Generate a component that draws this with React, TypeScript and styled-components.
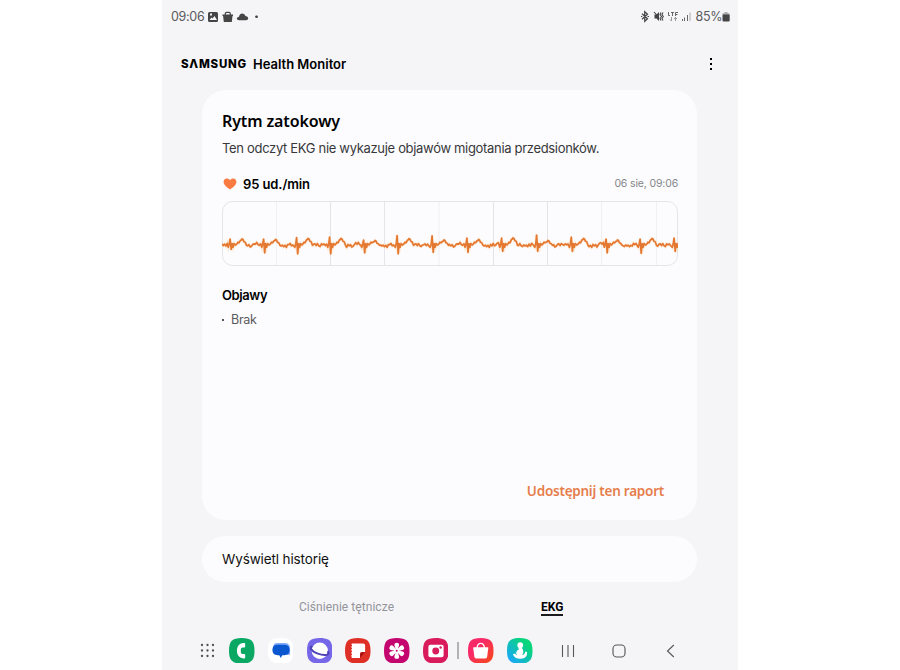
import React from "react";
import styled, { createGlobalStyle } from "styled-components";

const Global = createGlobalStyle`
  * { box-sizing: border-box; }
  body { margin: 0; background: #fff; font-family: Inter, "Liberation Sans", sans-serif; }
`;

const Device = styled.div`
  width: 576px;
  height: 670px;
  margin-left: 162px;
  background: #f5f5f8;
  overflow: hidden;
  display: flex;
  flex-direction: column;
`;

const Label = styled.span<{
  $size: number; $color?: string; $weight?: number; $spacing?: number; $font?: string; $line?: number;
}>`
  display: block;
  white-space: pre;
  font-size: ${(p) => p.$size}px;
  line-height: ${(p) => p.$line ?? 20}px;
  font-weight: ${(p) => p.$weight ?? 400};
  color: ${(p) => p.$color ?? "#000"};
  letter-spacing: ${(p) => p.$spacing ?? 0}px;
  font-family: ${(p) => p.$font ?? "Inter"}, sans-serif;
`;

const StatusBar = styled.div`
  height: 33px;
  padding: 0 8px 0 9px;
  display: flex;
  align-items: center;
  justify-content: space-between;
`;
const StatusGroup = styled.div`
  display: flex;
  align-items: center;
`;
const StatusIcons = styled.svg`
  display: block;
`;

const AppBar = styled.header`
  height: 57px;
  padding: 4px 21px 0 19px;
  display: flex;
  align-items: center;
  justify-content: space-between;
`;
const Brand = styled.div`
  display: flex;
  align-items: center;
  gap: 6px;
  height: 20px;
`;
const MoreButton = styled.button`
  border: 0;
  background: none;
  padding: 0;
  width: 12px;
  height: 20px;
  display: flex;
  flex-direction: column;
  align-items: center;
  justify-content: center;
  gap: 3px;
`;
const MoreDot = styled.i`
  width: 2px;
  height: 2px;
  background: #000;
`;

const Card = styled.section`
  margin: 0 41px 0 40px;
  height: 430px;
  padding: 21px 19px 0 20px;
  border-radius: 24px;
  background: #fcfcfe;
  display: flex;
  flex-direction: column;
`;
const RateRow = styled.div`
  margin-top: 9px;
  height: 20px;
  display: flex;
  align-items: center;
  justify-content: space-between;
`;
const Rate = styled.div`
  display: flex;
  align-items: center;
  gap: 6px;
`;
const Chart = styled.svg`
  display: block;
  margin-top: 7px;
`;
const Symptoms = styled.div`
  margin-top: 18px;
  display: flex;
  flex-direction: column;
  gap: 5px;
`;
const SymptomItem = styled.div`
  display: flex;
  align-items: center;
  gap: 7px;
`;
const Bullet = styled.i`
  width: 2px;
  height: 2px;
  background: #555;
`;
const ShareButton = styled.button`
  border: 0;
  background: none;
  padding: 0;
  margin: auto 14px 19px auto;
`;
const HistoryButton = styled.button`
  margin: 16px 41px 0 40px;
  height: 46px;
  flex: none;
  border: 0;
  border-radius: 23px;
  padding: 0 20px 1px;
  background: #fcfcfe;
  display: flex;
  align-items: center;
`;

const Tabs = styled.nav`
  height: 49px;
  padding-top: 15px;
  display: grid;
  grid-template-columns: 137px 242px auto;
  align-items: start;
`;
const Tab = styled.div<{ $active?: boolean }>`
  width: max-content;
  margin-top: ${(p) => (p.$active ? 3 : 0)}px;
  grid-column: ${(p) => (p.$active ? 3 : 2)};
  border-bottom: 2px solid ${(p) => (p.$active ? "#1c1c20" : "transparent")};
`;

const Dock = styled.div`
  height: 39px;
  padding-left: 38px;
  display: flex;
  align-items: center;
`;
const Glyph = styled.svg<{ $gap?: number }>`
  display: block;
  flex: none;
  margin-left: ${(p) => p.$gap ?? 0}px;
`;

type Beat = [x: number, up: number, down: number, tx: number, ty: number];
const beats: Beat[] = [
  [8.5, 38, 48.5, 20, 38],
  [42, 38, 52, 53.5, 38.5],
  [75, 36.5, 53, 86, 37.5],
  [108, 36, 53, 119, 37.5],
  [142, 39, 52, 153, 39.5],
  [175.5, 34.5, 53, 187, 37.7],
  [210.5, 34.8, 51.5, 222, 39],
  [245.3, 37, 51.5, 256.5, 38.5],
  [280, 37, 50.5, 291, 37],
  [315, 34, 50.3, 326, 39.5],
  [349.7, 36, 50.5, 361.5, 37.5],
  [384.5, 38, 52, 395.5, 39],
  [418.5, 38, 52.5, 430, 37.5],
  [452.5, 37, 50.5, 466, 42],
];
const ripple = [0, 1.3, 0.2, 1.8, -0.6, 0.5, -0.4, 1.6, 0.9, -0.7, -1.1, 0.3, -1.4, 0.4, 1.1, -0.2, 0.7];

function ecgPath() {
  const pts: string[] = [];
  let start = 0;
  let n = 0;
  beats.forEach(([x, up, down, tx, ty]) => {
    for (let p = start; p < x - 3; p += 1.3) {
      const rise = p > x - 9 ? 1.2 : 0;
      pts.push(`${p.toFixed(1)} ${(44.2 - rise + ripple[n++ % ripple.length] * 1.15).toFixed(1)}`);
    }
    pts.push(
      `${x - 2.2} 46.3`, `${x - 1.2} 42.5`, `${x - 0.4} ${up}`, `${x + 0.7} ${down}`,
      `${x + 1.6} 42.5`, `${x + 2.6} 46.3`, `${x + 3.6} 42.5`, `${x + 5} 44`,
      `${tx - 5} 42.8`, `${tx - 4} 41.2`, `${tx - 3} 41.8`, `${tx - 1.5} ${ty + 1.4}`,
      `${tx - 0.5} ${ty + 1}`, `${tx} ${ty}`, `${tx + 1} ${ty + 0.5}`, `${tx + 2} ${ty + 2.8}`,
      `${tx + 3.2} ${ty + 3.2}`, `${tx + 4.5} 44.3`
    );
    start = tx + 5.6;
  });
  return "M" + pts.slice(0, -10).join("L");
}

const gridLines: [number, string][] = [
  [54.5, "#f0f0f3"], [108.5, "#e4e4e8"], [162.5, "#e6e6ea"], [217, "#efeff2"],
  [271.5, "#e4e4e8"], [325.5, "#e4e4e8"], [379.5, "#f0f0f3"], [434.5, "#f1f1f4"],
];

const EcgChart = () => (
  <Chart width="456" height="66" viewBox="0 0 456 66">
    <defs><clipPath id="frame"><rect width="456" height="66" rx="11" /></clipPath></defs>
    {gridLines.map(([x, c]) => <path key={x} d={`M${x} 1V64`} stroke={c} />)}
    <rect x=".5" y=".5" width="455" height="64" rx="10" fill="none" stroke="#e5e5e9" />
    <path d={ecgPath()} clipPath="url(#frame)" fill="none" stroke="#fbd9b4" strokeWidth="3" strokeOpacity=".45" />
    <path d={ecgPath()} clipPath="url(#frame)" fill="none" stroke="#e57830" strokeWidth="1.7" strokeLinejoin="round" />
  </Chart>
);

const squircle = "M13 0C22.8 0 26 3.2 26 13S22.8 26 13 26 0 22.8 0 13 3.2 0 13 0Z";

const AppIcon = ({ fill, gap = 13.3, children }: { fill: string; gap?: number; children: React.ReactNode }) => (
  <Glyph $gap={gap} width="25.5" height="25.5" viewBox="0 0 26 26">
    <path d={squircle} fill={fill} />
    {children}
  </Glyph>
);

export default function App() {
  return (
    <>
      <Global />
      <Device>
        <StatusBar>
          <StatusGroup>
            <Label $size={12.5} $color="#5a5a5c" $spacing={-0.3}>09:06</Label>
            <StatusIcons width="56" height="14" viewBox="205 10 56 14">
              <path fill="#454545" fillRule="evenodd" d="M210.5 12h7q1.5 0 1.5 1.5v7q0 1.500-1.500 1.500h-7q-1.500 0-1.500-1.500v-7q0-1.500 1.500-1.500zM210.500 20h7.500l-2.500-4-2 2.500-1-1zM211 13.500v2h2v-2z" />
              <path fill="#454545" d="M223.500 14.500h10.500v1.500h-.5l-.7 6h-8l-.7-6h-.6z" />
              <path fill="none" stroke="#454545" strokeWidth="1.200" d="M226.300 15v-1.500q0-1.200 1.200-1.200h2.600q1.200 0 1.200 1.200V15" />
              <path fill="#454545" d="M240 20.200q-2.200 0-2.200-1.600t2.200-1.900q.7-3.200 3.500-3.200 2.100 0 3 2.500 2.700.2 2.700 2.300 0 1.900-2.200 1.900z" />
              <rect x="256.300" y="15.500" width="2.500" height="2.500" rx=".8" fill="#454545" />
            </StatusIcons>
          </StatusGroup>
          <StatusGroup>
            <StatusIcons width="56" height="14" viewBox="640 10 56 14">
              <path fill="none" stroke="#444" strokeWidth="1.200" d="M642 13.800l5.500 5-2.800 2.500v-9.600l2.800 2.500-5.500 5M641 16.500h1.300M647.500 16.500h1.500" />
              <path fill="#444" d="M654.500 14.500h2l2.500-2.500v9l-2.500-2.500h-2z" />
              <path stroke="#444" fill="none" strokeWidth="1.100" d="M654 12l5 5.500M661 12.500l-1 2 1.500 2-1.500 2 1 2M663 12.500l-1 2 1.300 2-1.300 2 1 2" />
              <path stroke="#666" fill="none" d="M668.500 12v3.500h1.500M671 12.500h3M672.500 12v4M678 12.500h-2.500v3.500M675.500 14.500h2" />
              <path stroke="#999" fill="none" d="M671.500 17v4M670 19.500l1.500 1.500M675.500 21v-4M674 18.500h3" />
              <path stroke="#666" d="M682.500 19v2M684.500 17.500V21M687.500 15v6" />
              <path stroke="#aaa" d="M690 12.500V21" />
            </StatusIcons>
            <Label $size={12.5} $color="#5a5a5c" $spacing={-0.4}>85%</Label>
            <StatusIcons width="8" height="14" viewBox="0 0 8 14">
              <path fill="#aaa" d="M2.500 2h3v1.200H7.500V5H.5V3.200h2z" />
              <rect x=".5" y="4.500" width="7.200" height="7" rx="1" fill="#454545" />
            </StatusIcons>
          </StatusGroup>
        </StatusBar>

        <AppBar>
          <Brand>
            <Label $size={11.5} $weight={800} $spacing={0.75}>SΛMSUNG</Label>
            <Label $size={13} $weight={600}>Health Monitor</Label>
          </Brand>
          <MoreButton aria-label="Menu"><MoreDot /><MoreDot /><MoreDot /></MoreButton>
        </AppBar>

        <Card>
          <Label $size={16} $weight={600} $spacing={-0.12} $font='"Noto Sans"'>Rytm zatokowy</Label>
          <Label $size={13} $color="#38383a" $line={34} $spacing={-0.32}>Ten odczyt EKG nie wykazuje objawów migotania przedsionków.</Label>
          <RateRow>
            <Rate>
              <Glyph $gap={1} width="14" height="12" viewBox="0 0 14 12">
                <path fill="#f97b42" d="M7 11.500C4.500 9.600.6 7.300.6 4 .6 0 5.300-.5 7 2.300 8.700-.5 13.400 0 13.400 4c0 3.300-3.900 5.600-6.400 7.500z" />
              </Glyph>
              <Label $size={13} $weight={600} $spacing={-0.1}>95 ud./min</Label>
            </Rate>
            <Label $size={10.5} $color="#858588" $spacing={-0.15}>06 sie, 09:06</Label>
          </RateRow>
          <EcgChart />
          <Symptoms>
            <Label $size={13} $weight={600} $spacing={-0.4}>Objawy</Label>
            <SymptomItem><Bullet /><Label $size={12.5} $color="#5a5a5c" $spacing={-0.3}>Brak</Label></SymptomItem>
          </Symptoms>
          <ShareButton><Label $size={13.5} $weight={600} $spacing={-0.24} $color="#e67e4c" $font='"Noto Sans"'>Udostępnij ten raport</Label></ShareButton>
        </Card>

        <HistoryButton><Label $size={13.5} $color="#111" $spacing={-0.12}>Wyświetl historię</Label></HistoryButton>

        <Tabs>
          <Tab><Label $size={12} $color="#949498" $font="Roboto" $spacing={0.06}>Ciśnienie tętnicze</Label></Tab>
          <Tab $active><Label $size={12} $weight={700} $font="Roboto" $line={14}>EKG</Label></Tab>
        </Tabs>

        <Dock>
          <Glyph width="15" height="15" viewBox="0 0 15 15" fill="#505055">
            {[2, 7.5, 13].map((y) => [2, 7.5, 13].map((x) => <circle key={`${x}-${y}`} cx={x} cy={y} r="1.150" />))}
          </Glyph>
          <AppIcon gap={14} fill="#0aa862">
            <path fill="#fff" d="M14.500 5.200h1q1 0 1 1v2.500q0 1-1 1h-1.700q-1.800 0-1.800 3.300t1.800 3.300h1.700q1 0 1 1v2.500q0 1-1 1h-1C6 20.500 6 5.500 14.500 5.200z" />
          </AppIcon>
          <AppIcon fill="#fff">
            <path fill="#7faaf9" d="M9.500 5h7.500q5.500 0 5.500 6v6H12q-7-.5-7-6.500Q5 5 9.500 5z" />
            <path fill="#0b57d0" d="M10 7h6.500q5.500 0 5.500 5.300t-5.500 5.300h-2L13 20.500l-1.500-2.900H10q-5.500 0-5.500-5.300T10 7z" />
          </AppIcon>
          <AppIcon fill="#7567e8">
            <circle cx="13" cy="13" r="8.300" fill="#fff" />
            <path fill="none" stroke="#4e42b5" strokeWidth="2" d="M5.500 9C1.500 8 4 13.500 11 16s13.500 1.500 10-2.500" />
          </AppIcon>
          <AppIcon fill="#df3028">
            <path fill="#fff" d="M7.500 5.500h11q2 0 2 2v6.800h-3.200q-2 0-2 2v4H7.500q-1 0-1-1V6.500q0-1 1-1z" />
            <path fill="#a91413" d="M15.300 20.300v-3.500q0-2.200 2.200-2.200h3z" />
            <path stroke="#df3028" strokeWidth="1.200" strokeDasharray="1.300 1.700" d="M6.500 7v12.500" />
          </AppIcon>
          <AppIcon fill="#c5056f">
            {[0, 60, 120, 180, 240, 300].map((a) => (
              <path key={a} transform={`rotate(${a} 13 13)`} fill="#fff" d="M12.300 13L10.700 7.500q-.5-2.700 2.300-2.700t2.300 2.700L13.700 13z" />
            ))}
            <circle cx="13" cy="13" r="2.300" fill="#fff" /><circle cx="13" cy="13" r="1" fill="#c5056f" />
          </AppIcon>
          <AppIcon fill="#d91b5b">
            <rect x="5.500" y="7" width="15.500" height="12.500" rx="2" fill="#fff" />
            <circle cx="13" cy="13.200" r="3.500" fill="#d91b5b" /><circle cx="18" cy="9.700" r="1.200" fill="#d91b5b" />
          </AppIcon>
          <Glyph $gap={9} width="2" height="17"><path d="M1 0v17" stroke="#85858b" strokeWidth="1.200" /></Glyph>
          <AppIcon gap={9} fill="url(#store)">
            <defs><linearGradient id="store" x2="1" y2="1"><stop offset=".35" stopColor="#f92968" /><stop offset="1" stopColor="#f54a12" /></linearGradient></defs>
            <path fill="#fff" d="M6 9.500h14q.8 0 .7.800l-1.200 8.700q-.3 2-2.200 2H8.700q-1.900 0-2.200-2l-1.200-8.700q-.1-.8.700-.8z" />
            <path fill="none" stroke="#fff" strokeWidth="1.400" d="M9.500 10.500C8.500 3.800 17.500 3.800 16.500 10.500" />
          </AppIcon>
          <AppIcon fill="url(#fit)">
            <defs><linearGradient id="fit" x1="0" y1="1" x2="1" y2="0"><stop offset=".1" stopColor="#18a7fb" /><stop offset=".75" stopColor="#08d57c" /></linearGradient></defs>
            <circle cx="13.500" cy="7.300" r="2.900" fill="#fff" />
            <path fill="#fff" d="M14.500 9.500q2.700 2.200 2.200 4.700-.2 1.800-1.300 3.200 2.800-.5 3.300-3.700l1.800.5q.5 6.500-6.500 7-6.300.2-8-4.700l2.200-.6q.7 1.500 2.200 1.700-1.700-1.200-.9-3.200 1-2.300 2.800-3-1.500-.9.200-1.900z" />
          </AppIcon>
          <Glyph $gap={28.5} width="14" height="14" viewBox="0 0 14 14"><path d="M1.500 1v12M7 1v12M12.500 1v12" stroke="#58585d" strokeWidth="1.100" /></Glyph>
          <Glyph $gap={37} width="14" height="14" viewBox="0 0 14 14"><rect x="1" y="1" width="12" height="12" rx="3.800" fill="none" stroke="#58585d" strokeWidth="1.150" /></Glyph>
          <Glyph $gap={39.5} width="9" height="14" viewBox="0 0 9 14"><path d="M7.800 1L1.500 7l6.300 6" fill="none" stroke="#58585d" strokeWidth="1.150" /></Glyph>
        </Dock>
      </Device>
    </>
  );
}
